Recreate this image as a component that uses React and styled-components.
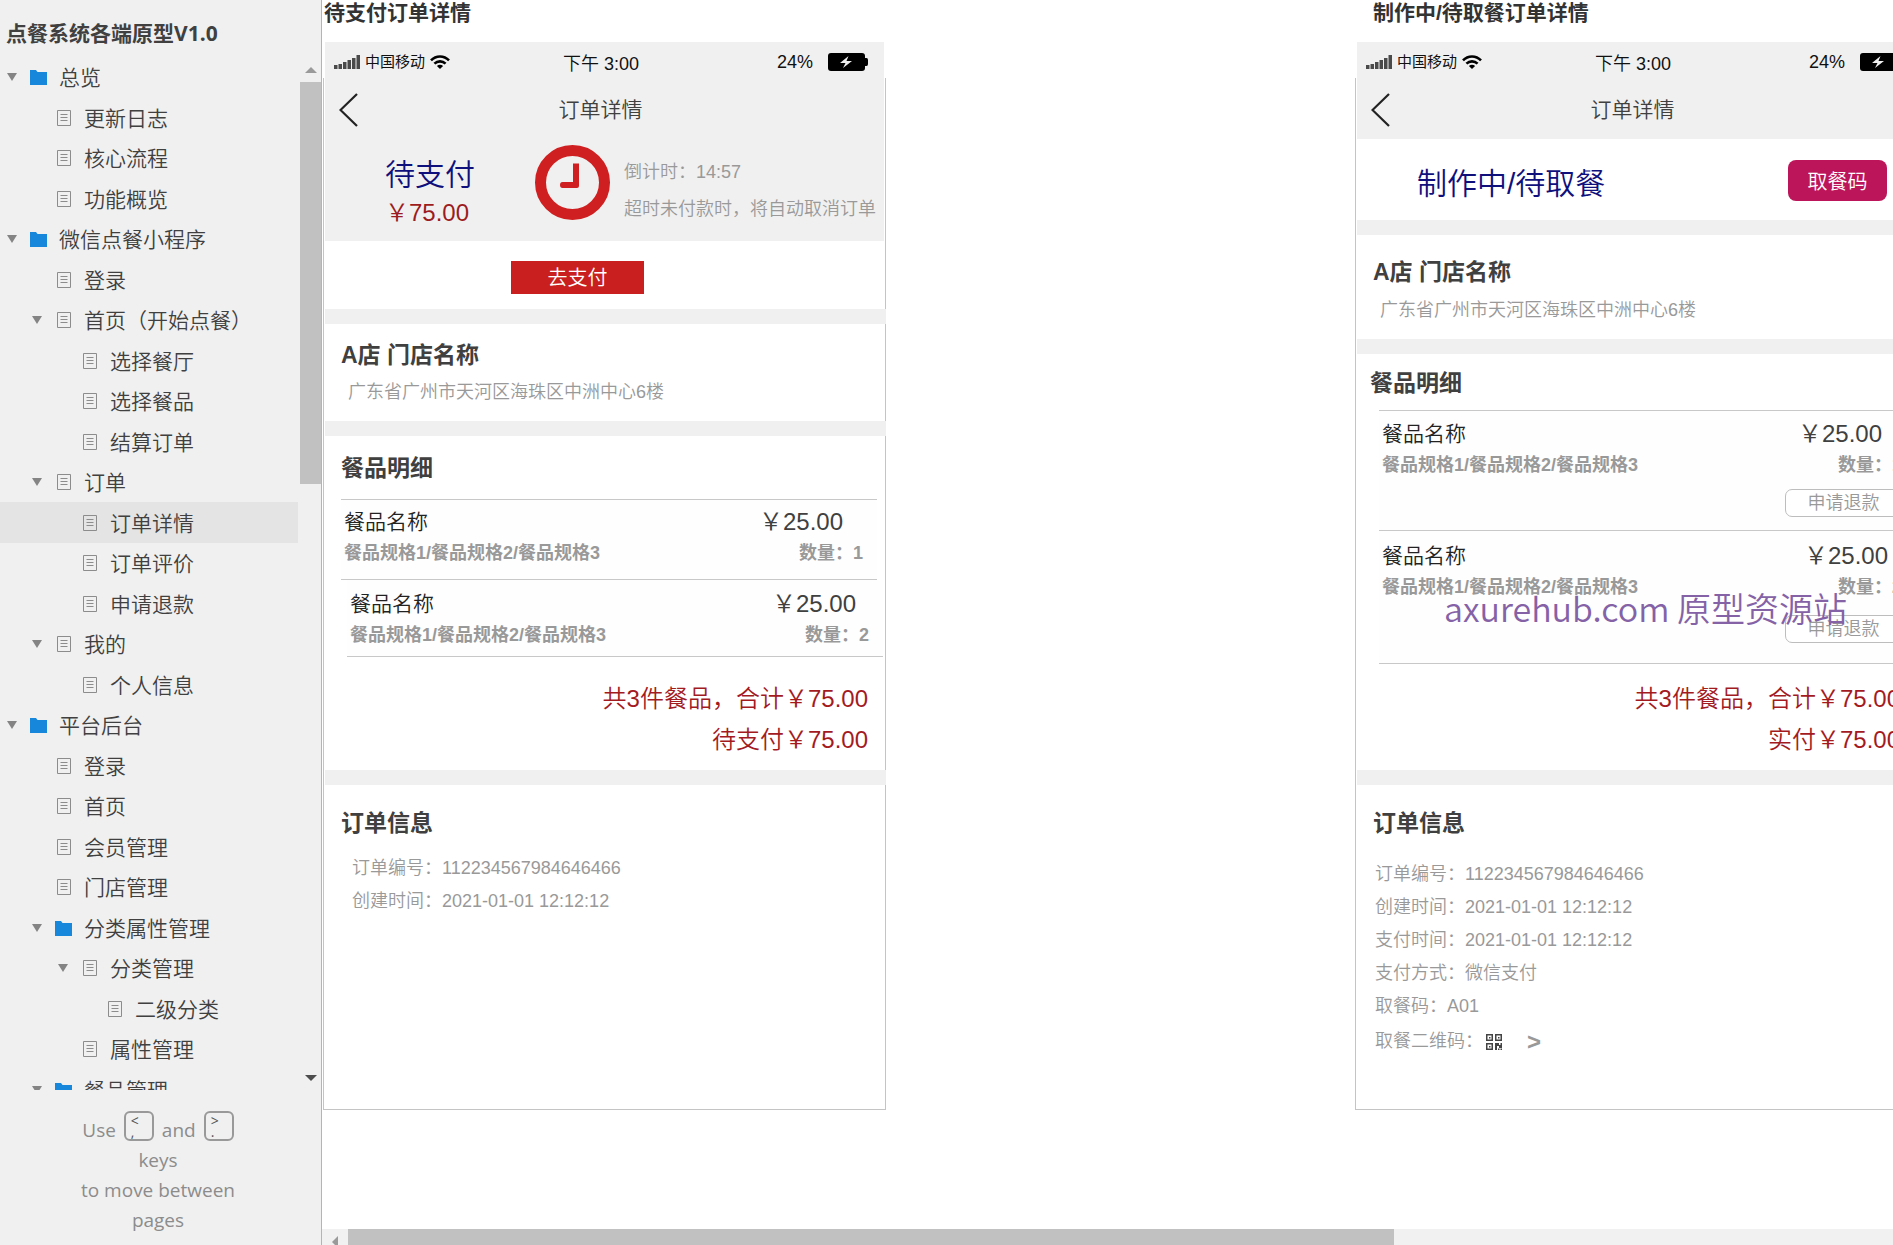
import React from 'react';
import styled, { createGlobalStyle } from 'styled-components';

const GlobalStyle = createGlobalStyle`
  * { box-sizing: border-box; }
  body { margin: 0; background: #fff; }
  h1, h2, h3, p, ul, dl, dd, dt { margin: 0; padding: 0; }
  ul { list-style: none; }
  a { color: inherit; text-decoration: none; }
  button { margin: 0; padding: 0; border: 0; background: none; color: inherit; font: inherit; cursor: pointer; }
  svg { display: block; flex: none; }
`;

const Page = styled.div`
  display: flex;
  height: 100vh;
  overflow: hidden;
  font-family: "Liberation Sans", "Noto Sans CJK SC", sans-serif;
  font-weight: 350;
  color: #404040;
`;

/* ---------- sidebar ---------- */

const Sidebar = styled.nav`
  flex: none;
  display: flex;
  flex-direction: column;
  width: 322px;
  border-right: 1px solid #b4b4b4;
  background: #f0f0f0;
  font-family: "Open Sans", "Noto Sans CJK SC", sans-serif;
`;

const ProjectTitle = styled.h1`
  padding: 17px 0 8px 6px;
  font-size: 21px;
  line-height: 32px;
  font-weight: 700;
`;

const TreePane = styled.div`
  flex: 1;
  min-height: 0;
  display: flex;
  gap: 2px;
`;

const Tree = styled.ul`
  flex: 1;
  display: grid;
  grid-auto-rows: 40px 41px;
  overflow: hidden;
`;

const INDENTS = [0, 25, 51, 76];

const TreeRow = styled.li`
  display: flex;
  align-items: center;
  padding-left: ${p => 5 + INDENTS[p.$level]}px;
  background: ${p => (p.$selected ? '#e4e4e4' : 'transparent')};
`;

const Toggle = styled.button`
  width: 14px;
  height: 20px;
  display: grid;
  place-items: center;
`;

const ToggleSpace = styled.span`
  width: 14px;
`;

const NodeLink = styled.a`
  display: flex;
  align-items: center;
  gap: 11px;
  padding-left: 11px;
  font-size: 21px;
  line-height: 32px;
  white-space: nowrap;
`;

const ScrollColumn = styled.div`
  width: 21px;
  display: flex;
  flex-direction: column;
  align-items: center;
`;

const ScrollEnd = styled.div`
  flex: none;
  width: ${p => (p.$wide ? '26px' : 'auto')};
  height: 25px;
  display: grid;
  place-items: center;
`;

const Thumb = styled.div`
  flex: ${p => p.$share};
  align-self: stretch;
  background: #c1c1c1;
`;

const Rest = styled.div`
  flex: ${p => p.$share};
`;

const KeyHint = styled.p`
  flex: none;
  height: 155px;
  padding: 21px 5px 0 0;
  font-size: 19px;
  line-height: 30px;
  font-weight: 400;
  text-align: center;
  color: #8c8c8c;
`;

const KeyLine = styled.span`
  display: flex;
  justify-content: center;
  align-items: flex-end;
  gap: 8px;
`;

const Key = styled.kbd`
  display: flex;
  flex-direction: column;
  width: 30px;
  height: 30px;
  margin-bottom: 4px;
  padding: 2px 0 0 5px;
  border: 2px solid #999;
  border-radius: 6px;
  font-family: inherit;
  font-size: 14px;
  line-height: 11px;
  text-align: left;
  color: #555;
`;

/* ---------- canvas ---------- */

const Main = styled.main`
  position: relative;
  flex: 1;
  min-width: 0;
  display: flex;
  flex-direction: column;
  background: #fff;
`;

const Canvas = styled.div`
  flex: 1;
  min-height: 0;
  display: flex;
  gap: 469px;
  padding-left: 1px;
  overflow: hidden;
`;

const HorizontalScroll = styled.div`
  flex: none;
  height: 16px;
  display: flex;
  overflow: hidden;
  background: #f1f1f1;
`;

const Watermark = styled.div`
  position: absolute;
  left: 1122px;
  top: 584px;
  font-family: "Noto Sans CJK SC", sans-serif;
  font-size: 34px;
  line-height: 48px;
  color: #8562a6;
  white-space: nowrap;
  pointer-events: none;
`;

/* ---------- phone ---------- */

const Phone = styled.section`
  flex: none;
  width: 563px;
`;

const ScreenTitle = styled.h2`
  height: 42px;
  padding-left: ${p => p.$indent}px;
  font-size: 21px;
  line-height: 26px;
  font-weight: 700;
  color: #333;
`;

const StatusBar = styled.div`
  display: grid;
  grid-template-columns: 1fr auto 1fr;
  align-items: center;
  height: 36px;
  margin: 0 2px;
  padding: 4px 16px 0 9px;
  background: #f0f0f0;
  font-size: 18px;
  line-height: 24px;
  color: #111;
`;

const Carrier = styled.span`
  display: flex;
  align-items: center;
  gap: 5px;
  font-size: 15px;
  font-weight: 400;
`;

const Clock = styled.span`
  padding-top: 4px;
`;

const Battery = styled.span`
  display: flex;
  align-items: center;
  justify-content: flex-end;
  gap: 15px;
`;

const Body = styled.div`
  min-height: 1032px;
  border: 1px solid #c4c4c4;
  border-top: 0;
`;

const Top = styled.header`
  margin: 0 1px;
  background: #f0f0f0;
`;

const NavBar = styled.div`
  display: grid;
  grid-template-columns: 1fr auto 1fr;
  align-items: center;
  height: 61px;
  padding: 3px 22px 0 14px;
  font-size: 21px;
  line-height: 32px;
`;

const BackButton = styled.button`
  justify-self: start;
`;

const NavTitle = styled.h3`
  font-size: 21px;
  font-weight: inherit;
`;

const Countdown = styled.div`
  display: grid;
  grid-template-columns: 150px 89px 1fr;
  align-items: start;
  height: 102px;
  padding: 6px 0 0 60px;
`;

const StateName = styled.p`
  font-size: 30px;
  line-height: 40px;
  color: #10107c;
`;

const StateBlock = styled.div`
  padding-top: 10px;
`;

const Due = styled.p`
  font-size: 24px;
  line-height: 36px;
  color: #9c1c20;
`;

const Note = styled.div`
  padding-top: 9px;
  font-size: 18px;
  line-height: 37px;
  white-space: nowrap;
  color: #999;
`;

const PayArea = styled.div`
  display: flex;
  justify-content: center;
  height: 68px;
  padding: 20px 54px 0 0;
`;

const PayButton = styled.button`
  width: 133px;
  height: 33px;
  background: #c9201f;
  color: #fff;
  font-size: 20px;
  line-height: 32px;
`;

const PickupArea = styled.div`
  display: flex;
  justify-content: space-between;
  align-items: flex-start;
  padding: 21px 30px 16px 61px;
`;

const PickupState = styled(StateName)`
  padding-top: 4px;
`;

const PickupButton = styled.button`
  width: 99px;
  height: 41px;
  border-radius: 8px;
  background: #bc155a;
  color: #fff;
  font-size: 20px;
`;

const Divider = styled.div`
  height: 15px;
  margin: 0 -1px 0 1px;
  background: #f0f0f0;
`;

const Section = styled.section`
  padding: ${p => p.$top}px 0 ${p => p.$bottom}px ${p => p.$left || 17}px;
`;

const SectionTitle = styled.h3`
  font-size: 23px;
  line-height: 33px;
  font-weight: 700;
`;

const Address = styled.p`
  padding: ${p => p.$gap}px 0 0 7px;
  font-size: 18px;
  line-height: 24px;
  color: #999;
`;

const Items = styled.ul`
  margin: ${p => (p.$compact ? '10px 7px 0 9px' : '14px 8px 0 0')};
  border-top: 1px solid #c8c8c8;
`;

const Item = styled.li`
  margin: 0 -${p => p.$shift || 0}px 0 ${p => p.$shift || 0}px;
  padding: ${p => p.$top}px ${p => p.$right}px ${p => p.$bottom}px 3px;
  border-bottom: 1px solid #c8c8c8;
  background: #fefefe;
`;

const ItemLine = styled.div`
  display: flex;
  justify-content: space-between;
  height: 30px;
  padding-right: ${p => p.$inset}px;
  line-height: 30px;
`;

const ItemName = styled.span`
  font-size: 21px;
  color: #222;
`;

const Price = styled.span`
  font-size: 24px;
`;

const SpecLine = styled.div`
  display: flex;
  justify-content: space-between;
  padding-top: 4px;
  font-size: 18px;
  line-height: 24px;
  font-weight: 700;
  color: #999;
`;

const RefundButton = styled.button`
  display: block;
  width: 117px;
  height: 28px;
  margin: ${p => p.$gap}px 0 0 auto;
  border: 1px solid #bdbdbd;
  border-radius: 7px;
  background: #fff;
  font-size: 18px;
  line-height: 24px;
  color: #999;
`;

const Totals = styled.div`
  padding: ${p => p.$top}px 17px 0 0;
  font-size: 24px;
  line-height: 41px;
  text-align: right;
  color: #a31b1f;
`;

const Info = styled.dl`
  padding: ${p => p.$top}px 0 0 ${p => p.$left}px;
  font-size: 18px;
  line-height: 33px;
  color: #999;
`;

const InfoRow = styled.div`
  display: flex;
`;

const CodeRow = styled(InfoRow)`
  align-items: center;
  height: 37px;
`;

const CodeLink = styled.a`
  display: flex;
  align-items: center;
  gap: 25px;
  padding-left: 3px;
  font-size: 24px;
  font-weight: 700;
  line-height: 32px;
`;

/* ---------- drawings ---------- */

const ArrowDown = () => (
  <svg width="12" height="8" viewBox="0 0 12 8"><path d="M1 0h10L6 8z" fill="#848484" /></svg>
);
const ScrollDown = () => (
  <svg width="12" height="6" viewBox="0 0 12 6"><path d="M0 0h12L6 6z" fill="#4d4d4d" /></svg>
);
const ScrollUp = () => (
  <svg width="12" height="6" viewBox="0 0 12 6"><path d="M0 6h12L6 0z" fill="#9a9a9a" /></svg>
);
const ScrollLeft = () => (
  <svg width="6" height="12" viewBox="0 0 6 12"><path d="M6 0v12L0 6z" fill="#9a9a9a" /></svg>
);
const FolderIcon = () => (
  <svg width="18" height="18" viewBox="0 0 18 18"><path d="M0 2h6l1.5 2H17v13H0z" fill="#1787dc" /></svg>
);
const PageIcon = () => (
  <svg width="18" height="18" viewBox="0 0 18 18" fill="none" stroke="#8c8c8c">
    <path d="M2.5 1.5h13v15h-13z" />
    <path d="M5.5 5.500h7M5.500 8.500h7M5.500 11.500h7" />
  </svg>
);
const SignalIcon = () => (
  <svg width="26" height="14" viewBox="0 0 26 14" fill="#4a4a4a">
    <path d="M0 10h3.500v4H0zM4.500 9H8v5H4.500zM9 7h3.500v7H9zM13.500 5H17v9h-3.500zM18 3h3.500v11H18zM22.500 0h3.500v14h-3.500z" />
  </svg>
);
const WifiIcon = () => (
  <svg width="20" height="14" viewBox="0 0 20 14" fill="none" stroke="#000" strokeWidth="2.600">
    <path d="M1 5.400C6 .2 14 .2 19 5.400M4.400 8.600c3.200-3 8-3 11.200 0" />
    <path d="M10 14 6.900 11c1.800-1.600 4.400-1.600 6.200 0z" fill="#000" stroke="none" />
  </svg>
);
const BatteryIcon = () => (
  <svg width="40" height="18" viewBox="0 0 40 18">
    <rect x="0" y="0" width="37" height="18" rx="3" />
    <path d="M37 5h1.500q1.500 0 1.500 2v4q0 2-1.500 2H37z" />
    <path d="M20.500 3 12 10h5.500L15 15l9-7h-5.500z" fill="#f0f0f0" />
  </svg>
);
const BackIcon = () => (
  <svg width="19" height="34" viewBox="0 0 19 34" fill="none" stroke="#222" strokeWidth="2.200">
    <path d="M18 1 1.500 17 18 33" />
  </svg>
);
const ClockIcon = () => (
  <svg width="75" height="75" viewBox="0 0 75 75" fill="none" stroke="#cf1f20">
    <circle cx="37.500" cy="37.500" r="32" strokeWidth="11" />
    <path d="M38 18.500h6V41q0 2-2 2H27.500q-2.500 0-2.500-3t2.500-3H38z" fill="#cf1f20" stroke="none" />
  </svg>
);
const QrIcon = () => (
  <svg width="16" height="16" viewBox="0 0 16 16" fill="#444">
    <path fillRule="evenodd" d="M0 0h7v7H0zM1.500 1.500v4h4v-4zM9 0h7v7H9zM10.500 1.500v4h4v-4zM0 9h7v7H0zM1.500 10.500v4h4v-4z" />
    <path d="M3 3h1.500v1.500H3zM12 3h1.500v1.500H12zM3 12h1.500v1.500H3zM9 9h4v2h1.500V9H16v5h-3v-2h-2v4H9zM12 14.500h1.500V16H12zM14.500 14.500H16V16h-1.500z" />
  </svg>
);

/* ---------- data ---------- */

const NODES = [
  [0, 'folder', '总览', true],
  [1, 'page', '更新日志'],
  [1, 'page', '核心流程'],
  [1, 'page', '功能概览'],
  [0, 'folder', '微信点餐小程序', true],
  [1, 'page', '登录'],
  [1, 'page', '首页（开始点餐）', true],
  [2, 'page', '选择餐厅'],
  [2, 'page', '选择餐品'],
  [2, 'page', '结算订单'],
  [1, 'page', '订单', true],
  [2, 'page', '订单详情'],
  [2, 'page', '订单评价'],
  [2, 'page', '申请退款'],
  [1, 'page', '我的', true],
  [2, 'page', '个人信息'],
  [0, 'folder', '平台后台', true],
  [1, 'page', '登录'],
  [1, 'page', '首页'],
  [1, 'page', '会员管理'],
  [1, 'page', '门店管理'],
  [1, 'folder', '分类属性管理', true],
  [2, 'page', '分类管理', true],
  [3, 'page', '二级分类'],
  [2, 'page', '属性管理'],
  [1, 'folder', '餐品管理', true],
];

function PhoneFrame({ title, indent, banner, children }) {
  return (
    <Phone>
      <ScreenTitle $indent={indent}>{title}</ScreenTitle>
      <StatusBar>
        <Carrier><SignalIcon />中国移动<WifiIcon /></Carrier>
        <Clock>下午 3:00</Clock>
        <Battery>24%<BatteryIcon /></Battery>
      </StatusBar>
      <Body>
        <Top>
          <NavBar>
            <BackButton aria-label="返回"><BackIcon /></BackButton>
            <NavTitle>订单详情</NavTitle>
          </NavBar>
          {banner}
        </Top>
        {children}
      </Body>
    </Phone>
  );
}

function OrderItem({ count, inset, refundGap, ...box }) {
  return (
    <Item {...box}>
      <ItemLine $inset={inset}>
        <ItemName>餐品名称</ItemName>
        <Price>￥25.00</Price>
      </ItemLine>
      <SpecLine>
        <span>餐品规格1/餐品规格2/餐品规格3</span>
        <span>数量：{count}</span>
      </SpecLine>
      {refundGap && <RefundButton $gap={refundGap}>申请退款</RefundButton>}
    </Item>
  );
}

function Shop({ top, gap, bottom }) {
  return (
    <Section $top={top} $bottom={bottom}>
      <SectionTitle>A店 门店名称</SectionTitle>
      <Address $gap={gap}>广东省广州市天河区海珠区中洲中心6楼</Address>
    </Section>
  );
}

function InfoItem({ label, value }) {
  return (
    <InfoRow><dt>{label}：</dt><dd>{value}</dd></InfoRow>
  );
}

export default function App() {
  return (
    <>
      <GlobalStyle />
      <Page>
        <Sidebar>
          <ProjectTitle>点餐系统各端原型V1.0</ProjectTitle>
          <TreePane>
            <Tree>
              {NODES.map(([level, kind, name, open], i) => (
                <TreeRow key={i} $level={level} $selected={name === '订单详情'}>
                  {open ? <Toggle aria-label={`折叠${name}`}><ArrowDown /></Toggle> : <ToggleSpace />}
                  <NodeLink href="#">
                    {kind === 'folder' ? <FolderIcon /> : <PageIcon />}
                    {name}
                  </NodeLink>
                </TreeRow>
              ))}
            </Tree>
            <ScrollColumn>
              <ScrollEnd><ScrollUp /></ScrollEnd>
              <Thumb $share={402} />
              <Rest $share={581} />
              <ScrollEnd><ScrollDown /></ScrollEnd>
            </ScrollColumn>
          </TreePane>
          <KeyHint>
            <KeyLine>
              Use<Key><span>&lt;</span><span>,</span></Key>and<Key><span>&gt;</span><span>.</span></Key>
            </KeyLine>
            keys<br />to move between<br />pages
          </KeyHint>
        </Sidebar>

        <Main>
          <Canvas>
            <PhoneFrame
              title="待支付订单详情"
              indent={1}
              banner={
                <Countdown>
                  <StateBlock>
                    <StateName>待支付</StateName>
                    <Due>￥75.00</Due>
                  </StateBlock>
                  <ClockIcon />
                  <Note>
                    <p>倒计时：14:57</p>
                    <p>超时未付款时，将自动取消订单</p>
                  </Note>
                </Countdown>
              }
            >
              <PayArea><PayButton>去支付</PayButton></PayArea>
              <Divider />
              <Shop top={15} gap={8} bottom={17} />
              <Divider />
              <Section $top={16} $bottom={10}>
                <SectionTitle>餐品明细</SectionTitle>
                <Items>
                  <OrderItem count={1} inset={20} $top={7} $right={14} $bottom={14} />
                  <OrderItem count={2} inset={13} $top={9} $right={14} $bottom={9} $shift={6} />
                </Items>
                <Totals $top={21}>
                  <p>共3件餐品，合计￥75.00</p>
                  <p>待支付￥75.00</p>
                </Totals>
              </Section>
              <Divider />
              <Section $top={22} $bottom={0}>
                <SectionTitle>订单信息</SectionTitle>
                <Info $top={12} $left={11}>
                  <InfoItem label="订单编号" value="112234567984646466" />
                  <InfoItem label="创建时间" value="2021-01-01 12:12:12" />
                </Info>
              </Section>
            </PhoneFrame>

            <PhoneFrame title="制作中/待取餐订单详情" indent={18}>
              <PickupArea>
                <PickupState>制作中/待取餐</PickupState>
                <PickupButton>取餐码</PickupButton>
              </PickupArea>
              <Divider />
              <Shop top={21} gap={9} bottom={17} />
              <Divider />
              <Section $top={13} $bottom={10} $left={14}>
                <SectionTitle>餐品明细</SectionTitle>
                <Items $compact>
                  <OrderItem count={1} inset={20} refundGap={12} $top={8} $right={8} $bottom={13} />
                  <OrderItem count={2} inset={14} refundGap={16} $top={10} $right={8} $bottom={20} />
                </Items>
                <Totals $top={14}>
                  <p>共3件餐品，合计￥75.00</p>
                  <p>实付￥75.00</p>
                </Totals>
              </Section>
              <Divider />
              <Section $top={22} $bottom={0}>
                <SectionTitle>订单信息</SectionTitle>
                <Info $top={18} $left={2}>
                  <InfoItem label="订单编号" value="112234567984646466" />
                  <InfoItem label="创建时间" value="2021-01-01 12:12:12" />
                  <InfoItem label="支付时间" value="2021-01-01 12:12:12" />
                  <InfoItem label="支付方式" value="微信支付" />
                  <InfoItem label="取餐码" value="A01" />
                  <CodeRow>
                    <dt>取餐二维码：</dt>
                    <dd><CodeLink href="#" aria-label="查看取餐二维码"><QrIcon />&gt;</CodeLink></dd>
                  </CodeRow>
                </Info>
              </Section>
            </PhoneFrame>
          </Canvas>
          <HorizontalScroll>
            <ScrollEnd $wide><ScrollLeft /></ScrollEnd>
            <Thumb $share={1046} />
            <Rest $share={499} />
          </HorizontalScroll>
          <Watermark>axurehub.com 原型资源站</Watermark>
        </Main>
      </Page>
    </>
  );
}
